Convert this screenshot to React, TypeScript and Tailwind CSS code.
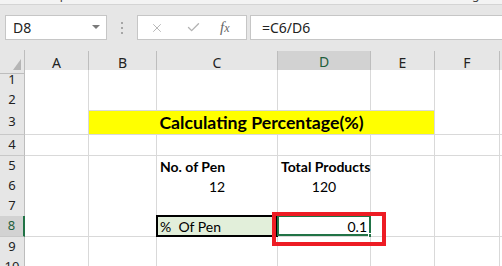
import { X, Check } from 'lucide-react';

const COLS = ['A', 'B', 'C', 'D', 'E', 'F', 'G'];
const GRID = 'grid grid-cols-[25px_64px_68px_121px_93px_64px_65px_40px]';
const HEAD = "font-['Noto_Sans',sans-serif]";
const CELL = "font-['Lato',sans-serif]";

const rowHeights: Record<number, string> = {
  1: 'h-[20px]',
  2: 'h-[20px]',
  3: 'h-[25px]',
  4: 'h-[21px]',
  5: 'h-[20px]',
  6: 'h-[20px]',
  7: 'h-[20px]',
  8: 'h-[21px]',
  9: 'h-[20px]',
  10: 'h-[20px]',
};

const RowHeader = ({ n }: { n: number }) => {
  const active = n === 8;
  return (
    <div
      className={`flex items-center justify-center border-b border-[#c8c8c8] text-[13px] ${HEAD} ${
        active
          ? 'bg-[#d2d2d2] text-[#1e5e3c] border-r-2 border-r-[#217346]'
          : 'bg-[#e6e6e6] text-[#222] border-r border-r-[#bdbdbd]'
      }`}
    >
      {n}
    </div>
  );
};

const Cell = ({
  children,
  className = '',
  bg = 'bg-white',
}: {
  children?: React.ReactNode;
  className?: string;
  bg?: string;
}) => (
  <div
    className={`relative flex items-center pt-[2px] whitespace-nowrap border-r border-b border-[#d9d9d9] text-[14px] leading-none text-black ${bg} ${CELL} ${className}`}
  >
    {children}
  </div>
);

const Row = ({ n }: { n: number }) => {
  const h = rowHeights[n];
  if (n === 3) {
    return (
      <div className={`${GRID} ${h}`}>
        <RowHeader n={n} />
        <Cell />
        <div
          className={`col-span-4 flex items-center justify-center pt-[1px] whitespace-nowrap bg-[#ffff00] border-b border-[#d9d9d9] border-r text-[17.7px] leading-none font-bold text-black ${CELL}`}
        >
          Calculating Percentage(%)
        </div>
        <Cell />
        <Cell />
      </div>
    );
  }
  return (
    <div className={`${GRID} ${h}`}>
      <RowHeader n={n} />
      <Cell />
      <Cell />
      {n === 5 && (
        <>
          <Cell className="pl-[3px] font-bold">No. of Pen</Cell>
          <Cell className="pl-[3px] font-bold">Total Products</Cell>
        </>
      )}
      {n === 6 && (
        <>
          <Cell className="justify-center">12</Cell>
          <Cell className="justify-center">120</Cell>
        </>
      )}
      {n === 8 && (
        <>
          <Cell bg="bg-[#e2efda]" className="pl-[3px] whitespace-pre">
            %  Of Pen
            <div className="absolute -inset-[1px] border-2 border-black pointer-events-none" />
          </Cell>
          <Cell className="justify-end pr-[3px]">
            0.1
            <div className="absolute -left-[1px] -top-[1px] right-[-1px] bottom-0 border-2 border-[#217346] pointer-events-none" />
            <div className="absolute right-[-4px] bottom-[-3px] w-[6px] h-[6px] bg-[#217346] border border-white" />
          </Cell>
        </>
      )}
      {n !== 5 && n !== 6 && n !== 8 && (
        <>
          <Cell />
          <Cell />
        </>
      )}
      <Cell />
      <Cell />
      <Cell />
    </div>
  );
};

export default function App() {
  return (
    <div className="relative w-[502px] h-[266px] overflow-hidden bg-[#e6e6e6]">
      {/* ribbon bottom, clipped */}
      <div className="h-[5px] overflow-hidden bg-[#f3f3f3] border-b border-[#d4d4d4]">
        <div className={`relative -mt-[13px] h-[16px] text-[12px] leading-[16px] text-[#444] ${HEAD}`}>
          <span className="absolute left-[46px] top-0">Clipboard</span>
          <span className="absolute left-[440px] top-0">Editing</span>
        </div>
      </div>

      {/* formula bar */}
      <div className="flex items-center h-[45px] pt-[10px] pb-[10px] pl-[5px]">
        <div
          className={`flex items-center justify-between w-[102px] h-[25px] bg-white border border-[#c6c6c6] pl-[7px] pr-[6px] text-[14px] text-[#222] ${HEAD}`}
        >
          <span>D8</span>
          <svg width="8" height="5" viewBox="0 0 8 5">
            <path d="M0 0h8L4 4z" fill="#7a7a7a" />
          </svg>
        </div>
        <div className="flex flex-col gap-[3px] mx-[14px]">
          <span className="w-[2px] h-[2px] bg-[#a6a6a6]" />
          <span className="w-[2px] h-[2px] bg-[#a6a6a6]" />
          <span className="w-[2px] h-[2px] bg-[#a6a6a6]" />
        </div>
        <div className="flex items-center w-[110px] h-[25px] bg-white border border-[#c6c6c6] pl-[12px]">
          <X className="w-[14px] h-[14px] text-[#b3b3b3]" strokeWidth={1.6} />
          <Check className="w-[15px] h-[15px] ml-[22px] text-[#b3b3b3]" strokeWidth={2.2} />
          <span className="ml-[19px] text-[15px] italic text-[#666] font-['Liberation_Serif',serif]">
            f<span className="text-[12px]">x</span>
          </span>
        </div>
        <div
          className={`flex items-center flex-1 h-[25px] ml-[3px] bg-white border border-[#c6c6c6] border-r-0 pl-[11px] text-[14px] text-[#222] ${HEAD}`}
        >
          =C6/D6
        </div>
      </div>

      {/* column headers */}
      <div className={`${GRID} h-[20px] text-[14px] ${HEAD}`}>
        <div className="relative bg-[#e6e6e6] border-r border-b border-[#bdbdbd]">
          <svg className="absolute right-[3px] bottom-[3px]" width="8" height="11" viewBox="0 0 8 11">
            <path d="M8 0V11H0z" fill="#b5b5b5" />
          </svg>
        </div>
        {COLS.map((c) => (
          <div key={c} className="flex flex-col">
            <div
              className={`flex flex-1 items-center justify-center mt-[1px] ${
                c === 'D'
                  ? 'bg-[#d2d2d2] text-[#1e5e3c] border-b-2 border-b-[#217346] border-r border-r-[#bdbdbd]'
                  : 'bg-[#e6e6e6] text-[#222] border-b border-b-[#bdbdbd] border-r border-r-[#bdbdbd]'
              }`}
            >
              {c}
            </div>
          </div>
        ))}
      </div>

      {Array.from({ length: 10 }, (_, i) => (
        <Row key={i + 1} n={i + 1} />
      ))}

      {/* red annotation box */}
      <div className="absolute left-[272px] top-[212px] w-[114px] h-[34px] border-[4px] border-[#ed1c24] pointer-events-none" />
    </div>
  );
}
